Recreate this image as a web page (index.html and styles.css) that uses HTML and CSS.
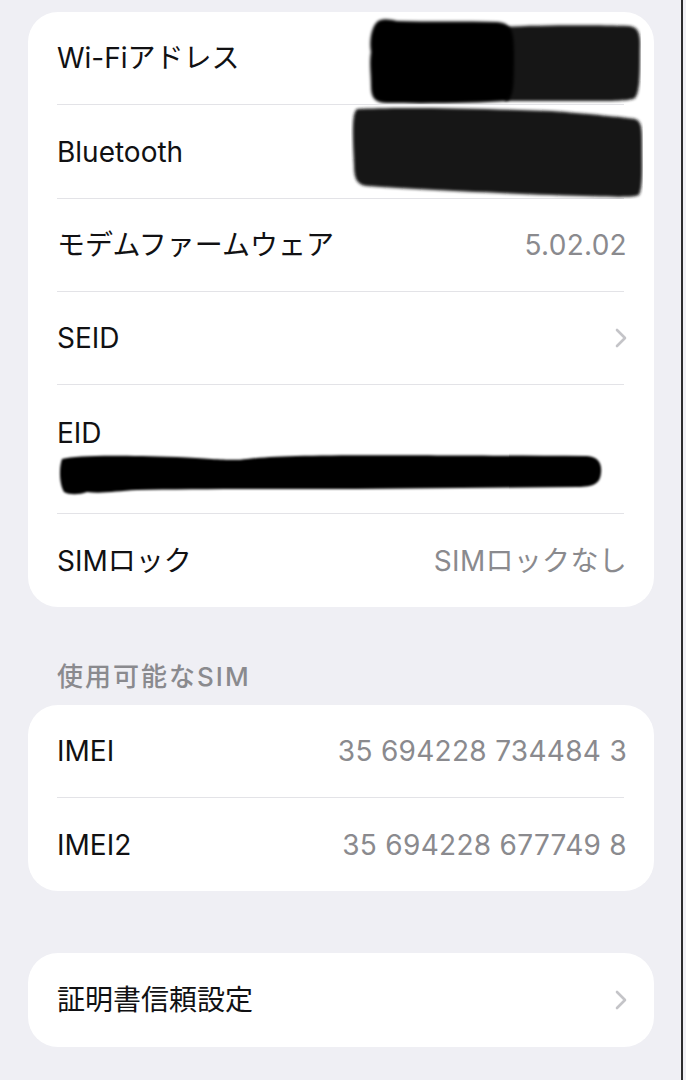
FILE: index.html
```html
<!DOCTYPE html>
<html lang="ja">
<head>
<meta charset="utf-8">
<title>情報</title>
<link rel="stylesheet" href="styles.css">
</head>
<body>
<div class="screen">
  <div class="card">
    <div class="row">
      <span class="label">Wi-Fiアドレス</span>
      <svg class="redact redact-wifi" width="274" height="92" viewBox="0 0 274 92" aria-hidden="true">
        <defs><filter id="b1" x="-10%" y="-10%" width="120%" height="120%"><feGaussianBlur stdDeviation="1.6"/></filter></defs>
        <path filter="url(#b1)" fill="#161616" d="M138,15 C170,13 230,13 262,14 C272,15 274,22 273,40 C273,62 273,80 268,86 C262,90 230,89 190,89 L138,89 Z"/>
        <path filter="url(#b1)" fill="#000" d="M10,10 C14,6 22,7 30,9 C60,10 100,9 130,10 C144,11 147,18 147,40 C147,70 147,86 140,89 C110,91 60,92 20,91 C8,91 4,86 4,74 C4,60 2,52 4,40 C2,30 4,16 10,10 Z"/>
      </svg>
    </div>
    <div class="row row-tall">
      <span class="label">Bluetooth</span>
      <svg class="redact redact-bt" width="292" height="94" viewBox="0 0 292 94" aria-hidden="true">
        <defs><filter id="b2" x="-10%" y="-10%" width="120%" height="120%"><feGaussianBlur stdDeviation="1.6"/></filter></defs>
        <path filter="url(#b2)" fill="#141414" d="M6,4 C40,2 120,3 200,6 C240,9 270,12 284,14 C291,16 291,24 291,40 C291,62 292,82 288,90 C282,93 260,92 200,90 C140,88 60,84 16,81 C6,80 3,74 3,60 C2,40 1,20 3,10 C4,6 5,5 6,4 Z"/>
      </svg>
    </div>
    <div class="row">
      <span class="label">モデムファームウェア</span>
      <span class="value">5.02.02</span>
    </div>
    <div class="row">
      <span class="label">SEID</span>
      <svg class="chevron" width="14" height="22" viewBox="0 0 14 22" aria-hidden="true">
        <path d="M3 3 L11 11 L3 19" fill="none" stroke="#c4c4c8" stroke-width="2.6" stroke-linecap="round" stroke-linejoin="round"/>
      </svg>
    </div>
    <div class="row row-stack">
      <span class="label">EID</span>
      <svg class="redact redact-eid" width="546" height="46" viewBox="0 0 546 46" aria-hidden="true">
        <defs><filter id="b3" x="-5%" y="-20%" width="110%" height="140%"><feGaussianBlur stdDeviation="1.3"/></filter></defs>
        <path filter="url(#b3)" fill="#050505" d="M5,8 C20,4 60,4 120,6 C160,8 175,10 190,8 C230,3 300,4 530,5 C542,6 545,13 544,22 C543,32 538,36 520,36 L300,38 C200,38 130,38 80,39 C60,40 45,43 30,41 C22,44 12,44 7,41 C2,33 2,16 5,8 Z"/>
      </svg>
    </div>
    <div class="row">
      <span class="label">SIMロック</span>
      <span class="value">SIMロックなし</span>
    </div>
  </div>

  <div class="section-header">使用可能なSIM</div>
  <div class="card">
    <div class="row">
      <span class="label">IMEI</span>
      <span class="value">35 694228 734484 3</span>
    </div>
    <div class="row">
      <span class="label">IMEI2</span>
      <span class="value">35 694228 677749 8</span>
    </div>
  </div>

  <div class="card card-last">
    <div class="row">
      <span class="label">証明書信頼設定</span>
      <svg class="chevron" width="14" height="22" viewBox="0 0 14 22" aria-hidden="true">
        <path d="M3 3 L11 11 L3 19" fill="none" stroke="#c4c4c8" stroke-width="2.6" stroke-linecap="round" stroke-linejoin="round"/>
      </svg>
    </div>
  </div>
</div>
</body>
</html>
```

FILE: styles.css
```css
html, body {
  margin: 0;
  padding: 0;
  background: #efeff4;
}

body {
  width: 686px;
  height: 1080px;
  overflow: hidden;
  font-family: Inter, "Noto Sans CJK JP", sans-serif;
  -webkit-font-smoothing: antialiased;
}

.screen {
  width: 683px;
  height: 1080px;
  box-sizing: border-box;
  padding: 12px 27px 0 28px;
  border-right: 2px solid #2c2c2e;
  background: #efeff4;
}

.card {
  background: #ffffff;
  border-radius: 30px;
  padding: 0 30px 0 29px;
}

.row {
  display: flex;
  align-items: center;
  justify-content: space-between;
  height: 93px;
  box-sizing: border-box;
  border-bottom: 1px solid #e3e3e7;
}

.row.row-tall {
  height: 94px;
}

.row:last-child {
  border-bottom: none;
}

.label {
  font-size: 28px;
  line-height: 34px;
  color: #111113;
  white-space: nowrap;
}

.value {
  font-size: 28px;
  line-height: 34px;
  color: #8a8a8e;
  white-space: nowrap;
  letter-spacing: 0.3px;
  margin-right: -3px;
}

.redact {
  display: block;
  flex-shrink: 0;
}

.redact-wifi {
  margin-right: -17px;
}

.redact-bt {
  margin: -1px -19px -1px 0;
}

.row.row-stack {
  flex-direction: column;
  align-items: flex-start;
  justify-content: flex-start;
  height: 129px;
  padding: 31px 0 0;
}

.redact-eid {
  margin-top: 1px;
}

.chevron {
  display: block;
  flex-shrink: 0;
  margin-right: -4px;
}

.section-header {
  margin: 53px 0 11px 29px;
  font-size: 26px;
  line-height: 34px;
  font-weight: 500;
  letter-spacing: 2px;
  color: #8a8a8e;
}

.card-last {
  margin-top: 62px;
}

.card-last .row {
  height: 94px;
}
```
